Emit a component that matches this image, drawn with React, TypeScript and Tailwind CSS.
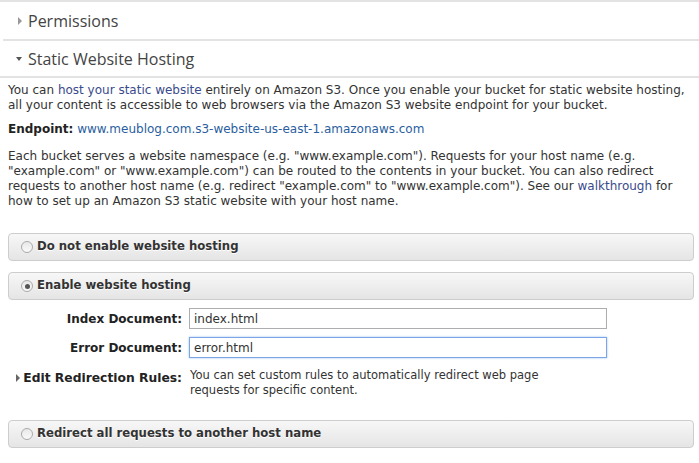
import React from 'react';

const body = "font-['DejaVu_Sans','Liberation_Sans',sans-serif]";

function Section({ title, open, h }: { title: string; open?: boolean; h: string }) {
  return (
    <div className={`${h} flex items-center gap-[6px] text-[16px] text-[#444] font-['Open_Sans','Noto_Sans',sans-serif] ${open ? 'pl-[13px]' : 'pl-[18px]'}`}>
      {open ? (
        <span className="w-0 h-0 border-l-[3.5px] border-r-[3.5px] border-t-[4px] border-l-transparent border-r-transparent border-t-[#555]" />
      ) : (
        <span className="w-0 h-0 border-t-[4px] border-b-[4px] border-l-[4px] border-t-transparent border-b-transparent border-l-[#999]" />
      )}
      <span>{title}</span>
    </div>
  );
}

function Radio({ checked }: { checked?: boolean }) {
  return (
    <span className="w-[12px] h-[12px] rounded-full border border-[#aaa] bg-gradient-to-b from-[#e8e8e8] to-[#fafafa] flex items-center justify-center">
      {checked && <span className="w-[5px] h-[5px] rounded-full bg-[#555]" />}
    </span>
  );
}

function OptionBar({ label, checked }: { label: string; checked?: boolean }) {
  return (
    <div className="ml-[8px] mr-[5px] h-[28px] rounded-[4px] border border-[#cdcdcd] bg-gradient-to-b from-[#f7f7f7] to-[#e5e5e5] flex items-center gap-[4px] pl-[12px]">
      <Radio checked={checked} />
      <span className="text-[11.7px] font-bold text-[#333] [text-shadow:0_1px_0_#fff]">{label}</span>
    </div>
  );
}

function Field({ label, value, focused }: { label: string; value: string; focused?: boolean }) {
  return (
    <div className="flex items-center">
      <span className="w-[182px] text-right font-bold text-[12px] text-[#222]">{label}</span>
      <div
        className={`ml-[7px] w-[418px] h-[21px] flex items-center px-[4px] text-[12px] text-[#333] border ${
          focused ? 'border-[#7ba5e4] shadow-[0_0_2px_#9cc0f0]' : 'border-[#adadad]'
        }`}
      >
        {value}
      </div>
    </div>
  );
}

export default function App() {
  return (
    <div className={`w-[699px] h-[463px] bg-white text-[#333] overflow-hidden ${body}`}>
      <div className="border-t-2 border-[#e3e3e3]">
        <Section title="Permissions" h="h-[37px]" />
      </div>
      <div className="border-t-2 border-[#e3e3e3] ml-[3px]">
        <Section title="Static Website Hosting" open h="h-[35px]" />
      </div>
      <div className="border-t-2 border-[#e3e3e3]">
        <div className="px-[8px] pt-[5px] text-[12px] leading-[15px]">
          <p>
            You can <span className="text-[#3a4a8c]">host your static website</span> entirely on Amazon S3. Once you
            enable your bucket for static website hosting, all your content is accessible to web browsers via the
            Amazon S3 website endpoint for your bucket.
          </p>
          <p className="mt-[9px]">
            <span className="font-bold text-[#222]">Endpoint:</span>{' '}
            <span className="text-[#2a5ea0]">www.meublog.com.s3-website-us-east-1.amazonaws.com</span>
          </p>
          <p className="mt-[12px]">
            Each bucket serves a website namespace (e.g. "www.example.com"). Requests for your host name (e.g.
            "example.com" or "www.example.com") can be routed to the contents in your bucket. You can also redirect
            requests to another host name (e.g. redirect "example.com" to "www.example.com"). See our{' '}
            <span className="text-[#3a4a8c]">walkthrough</span> for how to set up an Amazon S3 static website with
            your host name.
          </p>
        </div>

        <div className="mt-[24px] flex flex-col gap-[11px]">
          <OptionBar label="Do not enable website hosting" />
          <OptionBar label="Enable website hosting" checked />
        </div>

        <div className="mt-[8px] flex flex-col gap-[8px]">
          <Field label="Index Document:" value="index.html" />
          <Field label="Error Document:" value="error.html" focused />
        </div>

        <div className="mt-[10px] flex items-start">
          <div className="w-[182px] flex items-center justify-end gap-[3px] pt-[1px]">
            <span className="w-0 h-0 border-t-[4px] border-b-[4px] border-l-[4px] border-t-transparent border-b-transparent border-l-[#666]" />
            <span className="font-bold text-[12.3px] text-[#222]">Edit Redirection Rules:</span>
          </div>
          <p className="ml-[8px] w-[370px] text-[11.5px] leading-[15px] text-[#333]">
            You can set custom rules to automatically redirect web page requests for specific content.
          </p>
        </div>

        <div className="mt-[22px]">
          <OptionBar label="Redirect all requests to another host name" />
        </div>
      </div>
    </div>
  );
}
